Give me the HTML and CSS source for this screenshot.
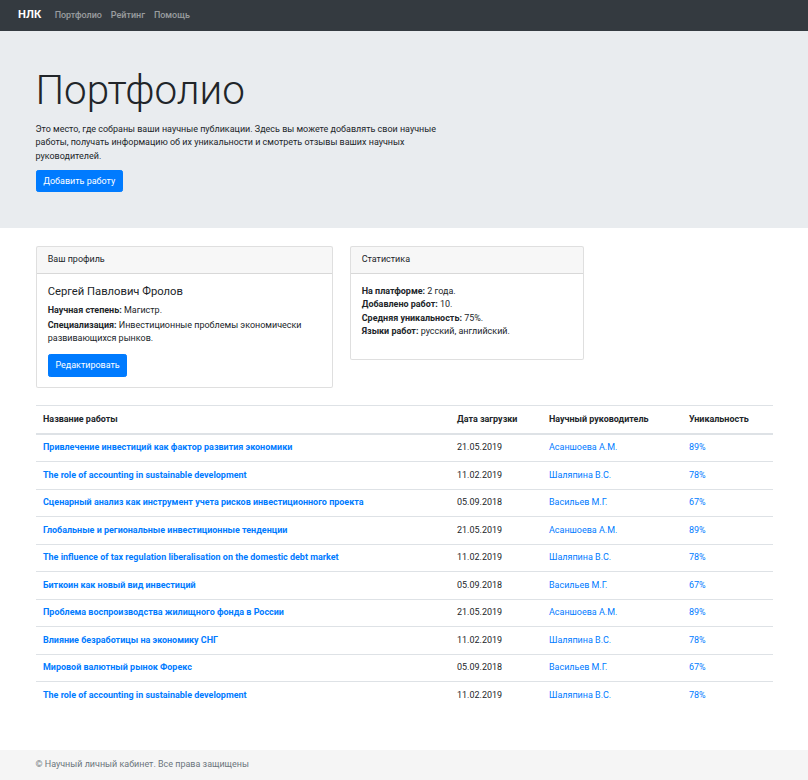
FILE: index.html
```html
<!DOCTYPE html>
<html lang="ru">
<head>
<meta charset="utf-8">
<title>Портфолио — НЛК</title>
<link rel="stylesheet" href="styles.css">
</head>
<body>
<nav class="navbar">
  <a class="brand" href="#">НЛК</a>
  <ul class="nav">
    <li><a class="nav-link" href="#">Портфолио</a></li>
    <li><a class="nav-link" href="#">Рейтинг</a></li>
    <li><a class="nav-link" href="#">Помощь</a></li>
  </ul>
</nav>

<header class="jumbotron">
  <div class="container">
    <h1 class="display">Портфолио</h1>
    <p class="intro">Это место, где собраны ваши научные публикации. Здесь вы можете добавлять свои научные работы, получать информацию об их уникальности и смотреть отзывы ваших научных руководителей.</p>
    <a class="btn" href="#">Добавить работу</a>
  </div>
</header>

<main class="container main">
  <div class="cards">
    <section class="card card-profile">
      <div class="card-header">Ваш профиль</div>
      <div class="card-body">
        <h5 class="card-title">Сергей Павлович Фролов</h5>
        <p class="card-text spaced"><b>Научная степень:</b> Магистр.</p>
        <p class="card-text"><b>Специализация:</b> Инвестиционные проблемы экономически развивающихся рынков.</p>
        <a class="btn" href="#">Редактировать</a>
      </div>
    </section>
    <section class="card card-stats">
      <div class="card-header">Статистика</div>
      <div class="card-body">
        <p class="card-text"><b>На платформе:</b> 2 года.</p>
        <p class="card-text"><b>Добавлено работ:</b> 10.</p>
        <p class="card-text"><b>Средняя уникальность:</b> 75%.</p>
        <p class="card-text"><b>Языки работ:</b> русский, английский.</p>
      </div>
    </section>
  </div>

  <table class="table">
    <thead>
      <tr>
        <th class="c-title">Название работы</th>
        <th class="c-date">Дата загрузки</th>
        <th class="c-sup">Научный руководитель</th>
        <th class="c-uniq">Уникальность</th>
      </tr>
    </thead>
    <tbody>
      <tr><td><a class="work" href="#">Привлечение инвестиций как фактор развития экономики</a></td><td>21.05.2019</td><td><a href="#">Асаншоева А.М.</a></td><td><a href="#">89%</a></td></tr>
      <tr><td><a class="work" href="#">The role of accounting in sustainable development</a></td><td>11.02.2019</td><td><a href="#">Шаляпина В.С.</a></td><td><a href="#">78%</a></td></tr>
      <tr><td><a class="work" href="#">Сценарный анализ как инструмент учета рисков инвестиционного проекта</a></td><td>05.09.2018</td><td><a href="#">Васильев М.Г.</a></td><td><a href="#">67%</a></td></tr>
      <tr><td><a class="work" href="#">Глобальные и региональные инвестиционные тенденции</a></td><td>21.05.2019</td><td><a href="#">Асаншоева А.М.</a></td><td><a href="#">89%</a></td></tr>
      <tr><td><a class="work" href="#">The influence of tax regulation liberalisation on the domestic debt market</a></td><td>11.02.2019</td><td><a href="#">Шаляпина В.С.</a></td><td><a href="#">78%</a></td></tr>
      <tr><td><a class="work" href="#">Биткоин как новый вид инвестиций</a></td><td>05.09.2018</td><td><a href="#">Васильев М.Г.</a></td><td><a href="#">67%</a></td></tr>
      <tr><td><a class="work" href="#">Проблема воспроизводства жилищного фонда в России</a></td><td>21.05.2019</td><td><a href="#">Асаншоева А.М.</a></td><td><a href="#">89%</a></td></tr>
      <tr><td><a class="work" href="#">Влияние безработицы на экономику СНГ</a></td><td>11.02.2019</td><td><a href="#">Шаляпина В.С.</a></td><td><a href="#">78%</a></td></tr>
      <tr><td><a class="work" href="#">Мировой валютный рынок Форекс</a></td><td>05.09.2018</td><td><a href="#">Васильев М.Г.</a></td><td><a href="#">67%</a></td></tr>
      <tr><td><a class="work" href="#">The role of accounting in sustainable development</a></td><td>11.02.2019</td><td><a href="#">Шаляпина В.С.</a></td><td><a href="#">78%</a></td></tr>
    </tbody>
  </table>
</main>

<footer class="footer">
  <div class="container">
    <span class="muted">© Научный личный кабинет. Все права защищены</span>
  </div>
</footer>
</body>
</html>
```

FILE: styles.css
```css
html {
  font-size: 8.98px;
}
* {
  box-sizing: border-box;
}
body {
  margin: 0;
  font-family: Roboto, "Noto Sans", "Liberation Sans", sans-serif;
  font-size: 1rem;
  line-height: 1.5;
  color: #212529;
  background: #fff;
}
a {
  color: #007bff;
  text-decoration: none;
}
b {
  font-weight: 700;
}
.container {
  max-width: 737px;
  margin: 0 auto;
}

/* navbar */
.navbar {
  display: flex;
  align-items: center;
  background: #343a40;
  padding: 0.5rem 1rem 0.5rem 18px;
}
.brand {
  color: #fff;
  font-size: 1.25rem;
  font-weight: 700;
  line-height: 1.5;
  padding: 0.3125rem 0;
  margin-right: 1rem;
}
.nav {
  display: flex;
  list-style: none;
  margin: 0;
  padding: 0;
}
.nav-link {
  display: block;
  padding: 0.5rem;
  color: rgba(255, 255, 255, 0.5);
  font-weight: 500;
}

/* jumbotron */
.jumbotron {
  background: #e9ecef;
  padding: 4rem 0;
  margin-bottom: 2rem;
}
.display {
  margin: 0 0 7px;
  font-size: 4.5rem;
  font-weight: 300;
  line-height: 1.2;
}
.intro {
  max-width: 423px;
  margin: 0 0 7px;
}
.btn {
  display: inline-block;
  background: #007bff;
  border: 1px solid #007bff;
  color: #fff;
  padding: 0.375rem 0.75rem;
  border-radius: 0.25rem;
  line-height: 1.5;
}

/* cards */
.cards {
  display: flex;
  align-items: flex-start;
  gap: 17px;
  margin-bottom: 17px;
}
.card {
  border: 1px solid rgba(0, 0, 0, 0.125);
  border-radius: 0.25rem;
  background: #fff;
}
.card-profile {
  width: 297px;
}
.card-stats {
  width: 234px;
}
.card-header {
  background: rgba(0, 0, 0, 0.03);
  border-bottom: 1px solid rgba(0, 0, 0, 0.125);
  padding: 6.2px 1.25rem;
}
.card-body {
  padding: 10.8px 1.25rem;
}
.card-title {
  margin: 0 0 5.7px;
  font-size: 1.25rem;
  font-weight: 400;
  line-height: 1.2;
}
.card-text {
  margin: 0;
}
.card-text.spaced {
  margin-bottom: 1px;
}
.card-text:last-of-type {
  margin-bottom: 1rem;
}

/* table */
.table {
  width: 100%;
  border-collapse: collapse;
  margin-bottom: 1rem;
}
.table th,
.table td {
  text-align: left;
  padding: 6.5px 0.75rem 6.5px 7.5px;
  border-top: 1px solid #dee2e6;
  vertical-align: top;
}
.table th {
  font-weight: 700;
}
.table thead th {
  border-bottom: 2px solid #dee2e6;
}
.table .work {
  font-weight: 700;
}
.c-title {
  width: 414px;
}
.c-date {
  width: 92px;
}
.c-sup {
  width: 140px;
}
.main {
  padding-bottom: 32px;
}

/* footer */
.footer {
  background: #f5f5f5;
  padding: 1rem 0;
}
.muted {
  color: #6c757d;
}
```
